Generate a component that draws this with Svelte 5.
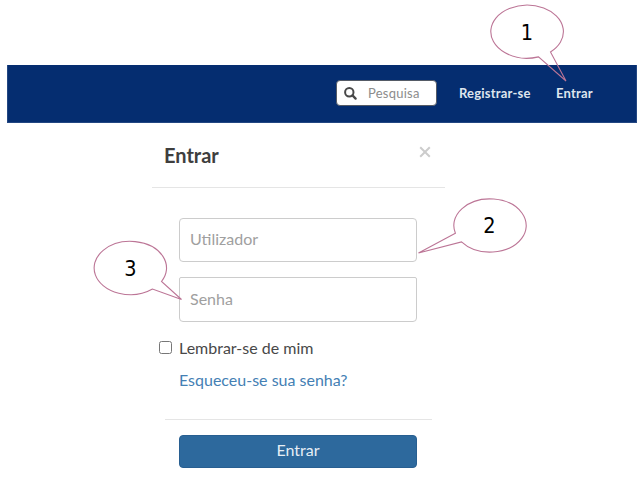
<script>
  const callouts = [
    { n: 1, x: 527, y: 32, d: 'M538.5 56.85 A36.3 26.5 0 1 1 550.5 51.95 L566 81 Z' },
    { n: 2, x: 489.5, y: 225.5, d: 'M455.4 233.3 A36.2 26.6 0 1 1 461.5 241.9 L418.5 253 Z' },
    { n: 3, x: 130.3, y: 268, d: 'M152.5 289 A36.2 26.6 0 1 1 161.5 281.5 L181.5 299.5 Z' }
  ];
</script>

<div class="page">
  <header>
    <label class="search">
      <svg width="13" height="13" viewBox="0 0 13 13"><circle cx="5.3" cy="5.2" r="4.2" fill="none" stroke="#484848" stroke-width="2" /><path d="M8.5 8.4 L11.6 11.6" stroke="#484848" stroke-width="2.3" stroke-linecap="round" /></svg>
      <span>Pesquisa</span>
    </label>
    <span class="register">Registrar-se</span>
    <span class="login">Entrar</span>
  </header>
  <main>
    <div class="title">
      <h1>Entrar</h1>
      <svg width="12" height="12" viewBox="0 0 12 12"><path d="M1.2 1.2 L10.8 10.8 M10.8 1.2 L1.2 10.8" stroke="#ccc" stroke-width="2" /></svg>
    </div>
    <form>
      <div class="field"><span class="user">Utilizador</span></div>
      <div class="field second"><span>Senha</span></div>
      <div class="remember"><i></i><span>Lembrar-se de mim</span></div>
      <div class="forgot"><span>Esqueceu-se sua senha?</span></div>
      <div class="rule"></div>
      <div class="submit"><span>Entrar</span></div>
    </form>
  </main>
  <svg class="overlay" width="643" height="504" viewBox="0 0 643 504">
    {#each callouts as c}
      <path d={c.d} />
      <text x={c.x} y={c.y + 7.5}>{c.n}</text>
    {/each}
  </svg>
</div>

<style>
  :global(body) { background: #fff; }
  .page { position: relative; width: 643px; height: 504px; box-sizing: border-box; padding: 65px 0 0 7px; overflow: hidden; font-family: Lato, sans-serif; }
  header { box-sizing: border-box; width: 630px; height: 58px; background: #052d70; border: 1px solid #234782; border-width: 0 1px 1px 1px; display: flex; align-items: center; padding-left: 328px; font-size: 13px; font-weight: 700; color: #dfe5ee; white-space: nowrap; }
  header > span { padding-bottom: 2px; letter-spacing: 0.2px; }
  .search { box-sizing: border-box; width: 101px; height: 26px; margin-top: -1px; background: #fff; border: 1px solid #555b66; border-radius: 4px; display: flex; align-items: center; padding-left: 7px; color: #8c8c8c; font-weight: 400; }
  .search span { margin-left: 11px; letter-spacing: 0.25px; padding-bottom: 1px; }
  .register { margin-left: 22px; width: 97px; }
  main { width: 293px; margin-left: 145px; }
  .title { box-sizing: border-box; height: 65px; border-bottom: 1px solid #e5e5e5; display: flex; justify-content: space-between; padding: 20px 14px 0 12px; }
  h1 { margin: 0; font-size: 20px; line-height: 24px; color: #3e3e3e; font-weight: 700; }
  .title svg { margin-top: 3px; }
  form { padding: 30px 13px 0 12px; font-size: 16px; white-space: nowrap; }
  .field { box-sizing: border-box; width: 238px; height: 44px; margin-left: 15px; border: 1px solid #ccc; border-radius: 4px; display: flex; align-items: center; padding: 0 0 3px 10px; color: #a0a0a0; }
  .second { height: 45px; margin-top: 15px; border-radius: 2px 2px 4px 4px; }
  .remember { margin: 15px 0 0 -5px; height: 20px; display: flex; align-items: center; color: #484848; }
  .remember i { box-sizing: border-box; width: 13px; height: 13px; border: 1px solid #777; border-radius: 2.5px; margin-right: 7px; }
  .forgot { margin: 13px 0 0 15px; height: 20px; line-height: 20px; color: #4480b4; }
  .rule { height: 1px; background: #e5e5e5; margin-top: 29px; width: 267px; margin-left: 1px; }
  .submit { box-sizing: border-box; width: 238px; height: 33px; margin: 15px 0 0 15px; padding-bottom: 4px; border: 1px solid #285f91; border-radius: 4px; background: #2d699d; color: #e6eef5; display: flex; align-items: center; justify-content: center; }
  .overlay { position: absolute; left: 0; top: 0; }
  .overlay path { fill: none; stroke: #bc7596; stroke-width: 1.1; }
  .overlay text { font: 21.5px "DejaVu Sans", sans-serif; font-stretch: condensed; text-anchor: middle; fill: #000; }
</style>
